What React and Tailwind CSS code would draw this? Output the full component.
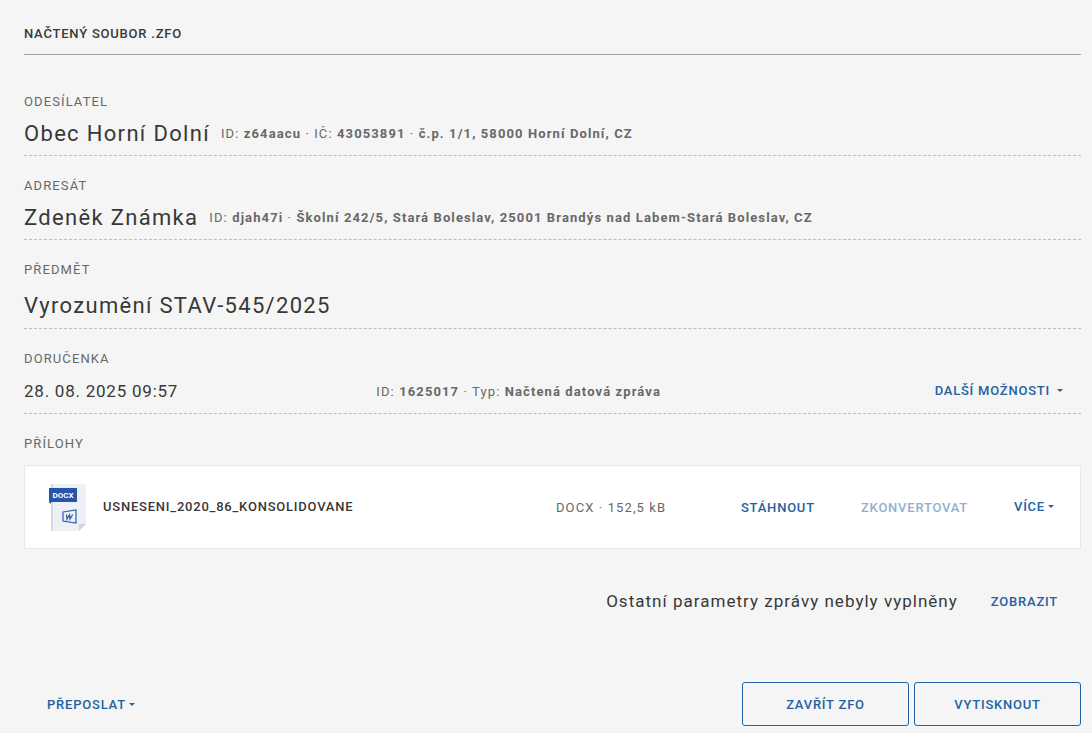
import clsx from "clsx";

function Caret({ className }) {
  return (
    <svg viewBox="0 0 6 3" className={clsx("mb-px h-[3px] w-[6px]", className)} aria-hidden="true">
      <path d="M0 0h6L3 3z" fill="currentColor" />
    </svg>
  );
}

function TextButton({ children, className, ...props }) {
  return (
    <button
      type="button"
      className={clsx(
        "flex items-center text-[13px] leading-5 font-medium tracking-[0.06em] uppercase text-[#2362a2] disabled:opacity-50",
        className,
      )}
      {...props}
    >
      {children}
    </button>
  );
}

function OutlineButton({ children }) {
  return (
    <button
      type="button"
      className="h-11 w-[167px] rounded-[3px] border border-[#2362a2] pt-px text-[13px] font-medium tracking-[0.06em] uppercase text-[#2362a2]"
    >
      {children}
    </button>
  );
}

function Label({ children }) {
  return (
    <h2 className="text-[13px] leading-5 tracking-[0.085em] uppercase text-[#686868]">
      {children}
    </h2>
  );
}

function Section({ label, children }) {
  return (
    <section className="border-b border-dashed border-[#bbbbbb] pt-5">
      <Label>{label}</Label>
      {children}
    </section>
  );
}

function Person({ name, details }) {
  return (
    <div className="flex min-h-[43px] items-center gap-[11px]">
      <span className="text-[22px] leading-8 tracking-[0.06em]">{name}</span>
      <Details items={details} />
    </div>
  );
}

// Seznam údajů oddělených tečkou, popisek je nepovinný
function Details({ items }) {
  return (
    <span className="pt-px text-[13px] leading-5 tracking-[0.085em] text-[#686868]">
      {items.map((item, idx) => (
        <span key={idx}>
          {idx > 0 && " · "}
          {item.label && `${item.label}: `}
          <strong className="font-bold">{item.value}</strong>
        </span>
      ))}
    </span>
  );
}

function DocxIcon() {
  return (
    <svg viewBox="0 0 40 48" className="h-12 w-10" role="img" aria-label="DOCX">
      <path d="M4 1h35v40l-7 7H4z" fill="#edf1f5" />
      <path d="M4 1h2v47H4z" fill="#d3d9e0" />
      <path d="M32 41h7l-7 7z" fill="#d0d7df" />
      <path d="M2 19h2v2z" fill="#1b438c" />
      <path d="M2 5h28v14H2z" fill="#2655ab" />
      <text
        x="16"
        y="15"
        textAnchor="middle"
        fill="#fff"
        fontSize="8"
        fontWeight="700"
        className="tracking-normal"
      >
        DOCX
      </text>
      <path d="M16 29l13-2v13l-13-2z" fill="none" stroke="#2f5cae" strokeWidth="1.200" />
      <path
        d="M19.500 31.500l.5 4.500 2.500-4 .5 4 2.700-4.500"
        fill="none"
        stroke="#2f5cae"
        strokeWidth="1.300"
      />
    </svg>
  );
}

function Attachment({ name, type, size }) {
  return (
    <div className="mt-[11px] flex h-[84px] items-center border border-[#e8e8e8] bg-white pr-[26px] pl-[22px]">
      <DocxIcon />
      <span className="ml-4 flex-1 text-[13px] leading-5 font-medium tracking-[0.06em]">
        {name}
      </span>
      <span className="w-[185px] pt-px text-[13px] leading-5 tracking-[0.085em] text-[#686868]">
        {type} · {size}
      </span>
      <TextButton className="w-[120px] pt-px">Stáhnout</TextButton>
      <TextButton className="w-[153px] pt-px" disabled>
        Zkonvertovat
      </TextButton>
      <TextButton>
        Více
        <Caret className="ml-[3px]" />
      </TextButton>
    </div>
  );
}

export default function App() {
  return (
    <main className="min-h-screen bg-[#f5f5f5] pt-6 pr-[11px] pb-[7px] pl-6 font-[Roboto,sans-serif] text-[#383838]">
      <h1 className="border-b border-[#a0a0a0] pb-[10px] text-[13px] leading-5 font-medium tracking-[0.06em] uppercase">
        Načtený soubor .zfo
      </h1>

      <div className="pt-[17px]">
        <Section label="Odesílatel">
          <Person
            name="Obec Horní Dolní"
            details={[
              { label: "ID", value: "z64aacu" },
              { label: "IČ", value: "43053891" },
              { value: "č.p. 1/1, 58000 Horní Dolní, CZ" },
            ]}
          />
        </Section>

        <Section label="Adresát">
          <Person
            name="Zdeněk Známka"
            details={[
              { label: "ID", value: "djah47i" },
              {
                value:
                  "Školní 242/5, Stará Boleslav, 25001 Brandýs nad Labem-Stará Boleslav, CZ",
              },
            ]}
          />
        </Section>

        <Section label="Předmět">
          <p className="pt-[10px] pb-[6px] text-[22px] leading-8 tracking-[0.06em]">
            Vyrozumění STAV-545/2025
          </p>
        </Section>

        <Section label="Doručenka">
          <div className="grid min-h-11 grid-cols-3 items-center">
            <span className="text-[17px] leading-6 tracking-[0.045em]">28. 08. 2025 09:57</span>
            <Details
              items={[
                { label: "ID", value: "1625017" },
                { label: "Typ", value: "Načtená datová zpráva" },
              ]}
            />
            <TextButton className="mr-[18px] justify-self-end">
              Další možnosti
              <Caret className="ml-[7px]" />
            </TextButton>
          </div>
        </Section>
      </div>

      <section className="pt-5">
        <Label>Přílohy</Label>
        <Attachment name="USNESENI_2020_86_KONSOLIDOVANE" type="DOCX" size="152,5 kB" />
      </section>

      <div className="mt-10 mr-[23px] flex items-center justify-end gap-[33px]">
        <p className="pb-px text-[17px] leading-6 tracking-[0.06em]">
          Ostatní parametry zprávy nebyly vyplněny
        </p>
        <TextButton className="pt-px">Zobrazit</TextButton>
      </div>

      <footer className="mt-[68px] flex items-center gap-[5px]">
        <TextButton className="mr-auto ml-[23px] pt-px">
          Přeposlat
          <Caret className="ml-[3px]" />
        </TextButton>
        <OutlineButton>Zavřít ZFO</OutlineButton>
        <OutlineButton>Vytisknout</OutlineButton>
      </footer>
    </main>
  );
}
